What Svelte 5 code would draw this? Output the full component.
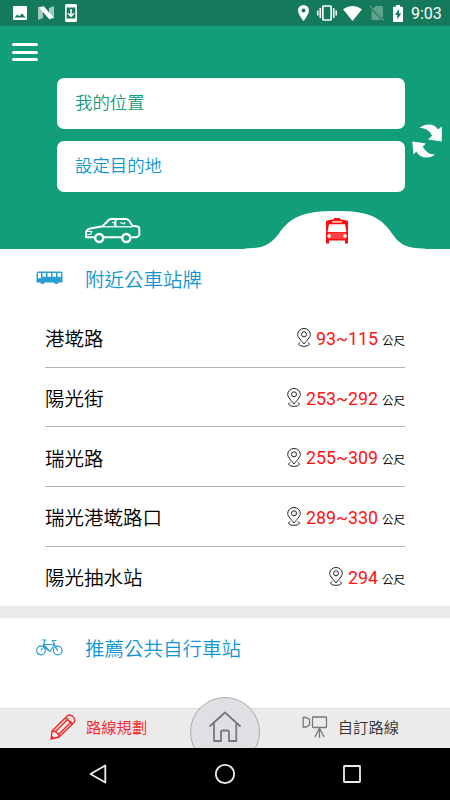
<script>
  let origin = $state("");
  let destination = $state("");
  let selected = $state("bus");

  const stops = [
    { name: "港墘路", distance: "93~115" },
    { name: "陽光街", distance: "253~292" },
    { name: "瑞光路", distance: "255~309" },
    { name: "瑞光港墘路口", distance: "289~330" },
    { name: "陽光抽水站", distance: "294" },
  ];

  function swap() {
    [origin, destination] = [destination, origin];
  }
</script>

<div class="screen">
  <div class="status">
    <div class="notices">
      <svg width="14" height="14" viewBox="0 0 14 14">
        <path fill="#fff" fill-rule="evenodd" d="M1 0h12q1 0 1 1v12q0 1-1 1H1q-1 0-1-1V1q0-1 1-1zM1.700 11.500h11L9 7.500l-2.700 2.700-2-1.700z" />
      </svg>
      <svg width="16" height="14" viewBox="0 0 16 14">
        <path fill="#fff" opacity=".6" d="M0 .5 5 4v8L0 14zM11 2l5-2v13l-5-3z" />
        <path fill="#fff" d="M1 1.500 5.500 0 15.500 11.500l-4 2z" />
      </svg>
      <svg width="12" height="18" viewBox="0 0 12 18">
        <path fill="#fff" fill-rule="evenodd" d="M1.500 0h9Q12 0 12 1.500v15q0 1.500-1.500 1.500h-9Q0 18 0 16.500v-15Q0 0 1.500 0zM1.700 3.500v11h8.600v-11z" />
        <path stroke="#fff" stroke-width="1.500" fill="none" d="M6 5v7M3 9.300l3 3 3-3" />
      </svg>
    </div>
    <div class="system">
      <svg width="11" height="16" viewBox="0 0 11 16">
        <path fill="#fff" fill-rule="evenodd" d="M5.500 0A5.500 5.500 0 0 1 11 5.500C11 9.500 5.500 16 5.500 16S0 9.500 0 5.500A5.500 5.500 0 0 1 5.500 0zm0 3.500a2 2 0 1 0 0 4 2 2 0 0 0 0-4z" />
      </svg>
      <svg class="vibrate" width="20" height="16" viewBox="0 0 20 16">
        <rect x="5.800" y="1" width="8.400" height="14" rx="1" fill="none" stroke="#fff" stroke-width="1.700" />
        <path stroke="#fff" stroke-width="1.500" d="M3.200 3v10M.8 5.500v5M16.800 3v10M19.200 5.500v5" />
      </svg>
      <svg class="wifi" width="19" height="15" viewBox="0 0 19 15">
        <path fill="#fff" d="M0 3.200Q9.500-3.200 19 3.200L9.500 15z" />
      </svg>
      <svg class="sim" width="14" height="16" viewBox="0 0 14 16">
        <path fill="#5fa58e" d="M6 1h6q1 0 1 1v11L3 3.500zM1.500 5 11.500 15H3q-1.500 0-1.500-1.500z" />
        <path stroke="#5fa58e" stroke-width="1.200" d="M0 1l14 14.500" />
      </svg>
      <svg class="battery" width="10" height="17" viewBox="0 0 10 17">
        <path fill="#fff" d="M3 0h4v1.700h2q1 0 1 1V16q0 1-1 1H1q-1 0-1-1V2.700q0-1 1-1h2z" />
        <path fill="#15795b" d="M6 4 2 10h2.300v4.500l4-6H6z" />
      </svg>
      <span class="clock">9:03</span>
    </div>
  </div>

  <header>
    <button class="menu" aria-label="選單"><i></i><i></i><i></i></button>
    <div class="search">
      <div class="fields">
        <input class="origin" placeholder="我的位置" bind:value={origin} />
        <input class="destination" placeholder="設定目的地" bind:value={destination} />
      </div>
      <button class="swap" aria-label="交換" onclick={swap}>
        <svg width="30" height="34" viewBox="0 0 30 34" fill="#fff">
          <path d="M7.500 4C13-.8 22.500-.8 26 5.500L29.800 2.500V17.500L16 15.500l4.200-3.800C17.500 6.500 13.500 4 7.500 4z" />
          <path d="M23 30.500C17.500 35.300 8 34.500 4.300 27.500L1.500 30.500.2 17.500 14 19.500 10.800 22.500c2.200 4.500 6.200 8 12.200 8z" />
        </svg>
      </button>
    </div>
    <div class="tabs">
      <button aria-label="開車" onclick={() => (selected = "car")}>
        <svg class="car" width="57" height="27" viewBox="0 0 57 27" fill="none" stroke="#fff" stroke-linejoin="round">
          <path stroke-width="2" d="M10.500 20.300H2V15Q3 12.300 6.500 11.500L18.500 9.300 25 2.800Q26 2 28 2h13.500q2.500 0 3.500 1.500l3.500 5.300 5 .7q1.800.4 1.800 2V18.500l-3 1.800h-5M20 20.300h17.500" />
          <path stroke-width="1.300" d="M18.500 9.800H48.500" />
          <path stroke-width="2" d="M31.500 2.500v7" />
          <path stroke-width="1.200" d="M28 5.500h2.500v3M36 5.500l4.500 1.500v-2M2 14.500h6l-1.500 3H2" />
          <circle cx="15.200" cy="21" r="4" stroke-width="2.400" />
          <circle cx="42.300" cy="21" r="4" stroke-width="2.400" />
        </svg>
      </button>
      <button class="hill" aria-label="公車" aria-pressed={selected === "bus"} onclick={() => (selected = "bus")}>
        <svg class="curve" width="180" height="39" viewBox="0 0 180 39">
          <path fill="#fff" d="M0 38.500C18 38.500 25 35 34 23.500C46 6 60 1 91 1C122 1 135 6 147 23.500C155 35 162 38.500 180 38.500V39H0z" />
        </svg>
        <svg class="bus" width="24" height="26" viewBox="0 0 24 26">
          <path fill="#fb0d0d" fill-rule="evenodd" d="M9 0h6v1.300l7 1.200q1 .2 1 1.200v21.800h-3V22.500H4v3H1V3.700q0-1 1-1.200l7-1.200zM4 6.300 2.500 14h19L20 6.300zM7 3.300v1.200h10V3.300z" />
          <path fill="#ff4141" d="M3 14.500h18v6.500H3z" />
          <circle cx="4" cy="18" r="1.800" fill="#fff" />
          <circle cx="20" cy="18" r="1.800" fill="#fff" />
        </svg>
      </button>
    </div>
  </header>

  <main>
    <section>
      <h2>
        <svg width="27" height="14" viewBox="0 0 27 14">
          <path fill="#2b9fd2" fill-rule="evenodd" d="M2 .5h23q1.500 0 1.500 1.500v9.500h-4q-.5 1.500-2.300 1.500T18 11.500H8.800q-.5 1.500-2.300 1.500t-2.300-1.500H.5V4Q.5.500 2 .5zM2 2v5.500l3-.5V2zM6.500 2v3.800H10V2zM11.500 2v3.800H15V2zM16.500 2v3.800H20V2zM21.500 2v3.800H25V2z" />
        </svg>
        附近公車站牌
      </h2>
      <ul>
        {#each stops as stop (stop.name)}
          <li>
            <span class="name">{stop.name}</span>
            <svg width="14" height="19" viewBox="0 0 14 19" fill="none" stroke="#222">
              <path d="M7 16C4.500 12.500.7 9.500.7 6.500a6.300 6 0 0 1 12.600 0C13.300 9.500 9.500 12.500 7 16z" />
              <circle cx="7" cy="6.300" r="2.500" />
              <path d="M3.300 14.300C-.5 16.500 3 18.300 7 18.300s7.500-1.800 3.700-4" />
            </svg>
            <span class="distance">{stop.distance}</span>
            <small>公尺</small>
          </li>
        {/each}
      </ul>
    </section>
    <section class="bikes">
      <h2>
        <svg width="27" height="17" viewBox="0 0 27 17" fill="none" stroke="#2b9fd2" stroke-width="1.200">
          <circle cx="5" cy="11.500" r="4.300" />
          <circle cx="21.700" cy="11.500" r="4.300" />
          <path d="M5 11.500 9 5.500h9.500M9 1 7 7.500 14 12.500 18.500 5.500M7.500 5.500 14 12.500M21.700 12 16.500 1.500h4M5.500 1h5" />
        </svg>
        推薦公共自行車站
      </h2>
    </section>
  </main>

  <nav class="bottom">
    <button class="plan">
      <svg width="26" height="26" viewBox="0 0 26 26" fill="none" stroke="#fb1d1d" stroke-width="1.300" stroke-linejoin="round">
        <path d="M1 25 2 17 17.500 1.800q2.500-2 5.500.8 3 3.200 1 5.900L9 23zM2 17l3.500.5 3 3L9 23M5.500 17.500 18.500 4.500M8.500 20.500 21.500 7.500M15.500 3.700l7 6.500M1.200 22l2.600 2.500" />
      </svg>
      <span>路線規劃</span>
    </button>
    <button class="home" aria-label="首頁">
      <svg width="34" height="32" viewBox="0 0 34 32" fill="none" stroke="#777" stroke-width="1.800" stroke-linejoin="round">
        <path d="M1.500 15.500 17 1.500l15.500 14M6 12v18h7V21q0-1.500 1.500-1.500h5Q21 19.500 21 21v9h7.300V12" />
      </svg>
    </button>
    <button class="custom">
      <svg width="26" height="22" viewBox="0 0 26 22" fill="none" stroke="#777" stroke-width="1.300">
        <rect x="10.500" y="1" width="14" height="10.500" rx=".8" />
        <path d="M1.200 1.500v9.500H4l3.500-2V3.500L4 1.500zM17.500 11.500V22M17 13l-4 8M18 13l4 8" />
      </svg>
      <span>自訂路線</span>
    </button>
  </nav>

  <div class="keys">
    <svg width="20" height="20" viewBox="0 0 20 20"><path d="M17.300 1.500v17L2.500 10z" /></svg>
    <svg width="22" height="22" viewBox="0 0 22 22"><circle cx="11" cy="11" r="9.200" /></svg>
    <svg width="20" height="20" viewBox="0 0 20 20"><rect x="2" y="2" width="16" height="16" rx=".5" /></svg>
  </div>
</div>

<style>
  :global(body) {
    margin: 0;
  }

  .screen {
    display: flex;
    flex-direction: column;
    width: 450px;
    height: 800px;
    overflow: hidden;
    background: #fff;
    font-family: Roboto, "Noto Sans CJK TC", sans-serif;
    font-weight: 350;
  }

  svg {
    display: block;
    flex: none;
  }

  button {
    padding: 0;
    border: 0;
    background: none;
    font: inherit;
    cursor: pointer;
  }

  .status {
    display: flex;
    justify-content: space-between;
    flex: none;
    height: 26px;
    padding: 0 9px 0 13px;
    background: #15795b;
  }

  .notices,
  .system {
    display: flex;
    align-items: center;
  }

  .notices {
    gap: 11px;
  }

  .vibrate {
    margin-left: 8px;
  }

  .wifi {
    margin-left: 6px;
  }

  .sim {
    margin-left: 8px;
  }

  .battery {
    margin: 0 8px 0 9px;
  }

  .clock {
    width: 30px;
    color: #fff;
    font-size: 16px;
    font-weight: 400;
    line-height: 28px;
    padding-top: 2px;
    white-space: nowrap;
  }

  header {
    display: flex;
    flex-direction: column;
    flex: none;
    height: 222.500px;
    background: #139e7a;
  }

  .menu {
    display: flex;
    flex-direction: column;
    gap: 4.500px;
    width: 26px;
    margin: 17px 0 0 12px;
  }

  .menu i {
    height: 3px;
    border-radius: 2px;
    background: #fff;
  }

  .search {
    display: flex;
    align-items: center;
    gap: 7px;
    margin: 16.500px 0 0 57px;
  }

  .swap {
    margin-top: 12px;
  }

  .fields {
    display: flex;
    flex-direction: column;
    gap: 12px;
    width: 348px;
  }

  input {
    box-sizing: border-box;
    height: 51px;
    padding: 0 18px;
    border: 0;
    border-radius: 7px;
    background: #fff;
    font: inherit;
    font-size: 17.400px;
  }

  input::placeholder {
    color: inherit;
    opacity: 1;
  }

  .origin {
    color: #139e7a;
  }

  .destination {
    color: #1296d2;
  }

  .tabs {
    display: flex;
    align-items: flex-end;
    gap: 104px;
    margin-top: auto;
    padding-left: 84px;
  }

  .car {
    margin-bottom: 5px;
  }

  .hill {
    display: grid;
    justify-items: center;
    align-items: center;
  }

  .hill svg {
    grid-area: 1 / 1;
  }

  .bus {
    margin-left: 4px;
    margin-top: 3px;
  }

  main {
    flex: 1;
    min-height: 0;
  }

  h2 {
    display: flex;
    align-items: center;
    gap: 22px;
    height: 59.500px;
    margin: 0;
    padding-left: 36px;
    color: #1296d2;
    font-size: 19.500px;
    font-weight: inherit;
  }

  ul {
    margin: 0;
    padding: 0 45px;
    list-style: none;
  }

  li {
    display: flex;
    align-items: center;
    box-sizing: border-box;
    height: 59.700px;
    padding-top: 1px;
    border-bottom: 1px solid #b5b5b5;
  }

  li:last-child {
    height: 59px;
    border-bottom: 0;
  }

  .name {
    flex: 1;
    font-size: 19.500px;
  }

  .distance {
    margin: 1px 4px 0 5px;
    color: #fb1212;
    font-size: 17.800px;
    font-weight: 400;
  }

  small {
    margin-top: 4px;
    font-size: 11.500px;
  }

  .bikes {
    border-top: 12px solid #e9eaeb;
  }

  .bottom {
    display: flex;
    justify-content: space-between;
    flex: none;
    box-sizing: border-box;
    height: 40px;
    padding: 0 51px 0 50px;
    border-top: 1px solid #dcdcdc;
    background: #ebebeb;
    font-size: 15.300px;
  }

  .plan,
  .custom {
    display: flex;
    align-items: center;
    gap: 10px;
    padding-bottom: 3px;
  }

  .plan span,
  .custom span {
    margin-top: -2px;
  }

  .plan {
    color: #fb1d1d;
  }

  .custom {
    color: #333;
  }

  .home {
    display: flex;
    justify-content: center;
    box-sizing: border-box;
    width: 70px;
    height: 70px;
    margin-top: -12px;
    padding-top: 13px;
    border: 1px solid #aaa;
    border-radius: 50%;
    background: #dfe0e4;
  }

  .keys {
    display: flex;
    align-items: center;
    justify-content: space-between;
    position: relative;
    flex: none;
    box-sizing: border-box;
    height: 52px;
    padding: 0 88px;
    background: #000;
  }

  .keys svg {
    fill: none;
    stroke: #eee;
    stroke-width: 1.800;
    stroke-linejoin: round;
  }
</style>
